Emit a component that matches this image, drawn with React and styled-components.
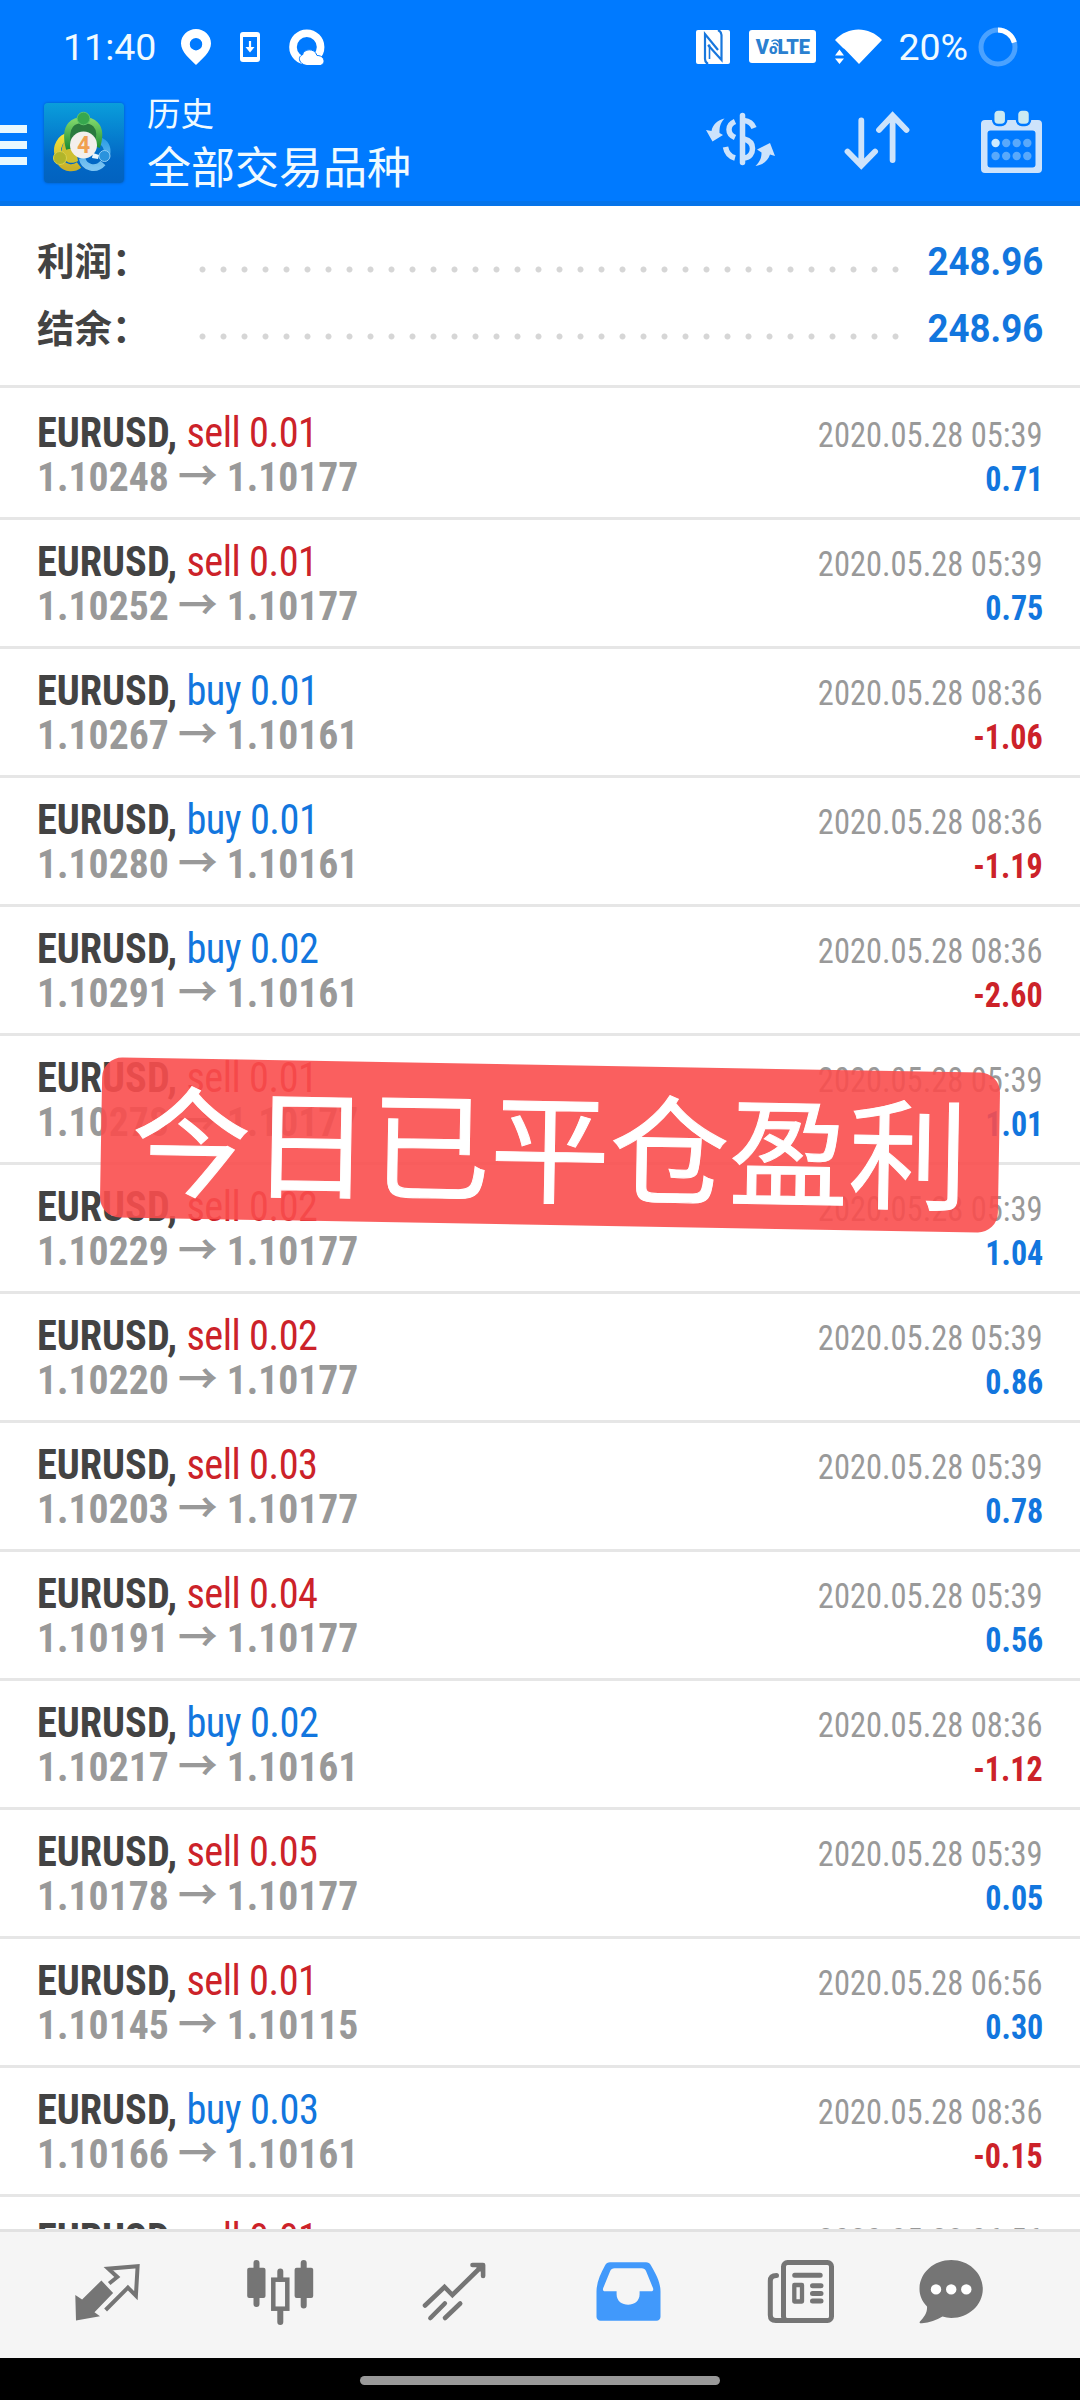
import React from "react";
import styled, { createGlobalStyle } from "styled-components";

const COLORS = {
  PRIMARY: "#007aff",
  BUY: "#1276de",
  SELL: "#cc2229",
  DARK: "#434343",
  MUTED: "#999999",
  LINE: "#e6e6e6",
  BAR: "#f5f5f5",
  ICON: "#757575",
};

const GlobalStyle = createGlobalStyle`
  body {
    margin: 0;
    background: #fff;
    font-family: Roboto, "Noto Sans CJK SC", sans-serif;
  }
`;

const Screen = styled.div`
  width: 1080px;
  height: 2400px;
  display: flex;
  flex-direction: column;
  overflow: hidden;
  position: relative;
`;

const Header = styled.header`
  flex: none;
  height: 206px;
  box-sizing: border-box;
  background: ${COLORS.PRIMARY};
  border-bottom: 5px solid #0574ea;
  color: #f0faff;
`;

const StatusBar = styled.div`
  height: 88px;
  box-sizing: border-box;
  padding: 5px 62px 0 63px;
  display: flex;
  align-items: center;
  justify-content: space-between;
  font-size: 37.5px;
`;

const StatusGroup = styled.div`
  display: flex;
  align-items: center;
  gap: ${(props) => props.$gap}px;

  svg {
    display: block;
  }
`;

const Clock = styled.span`
  margin-right: -4px;
`;

const Battery = styled.div`
  display: flex;
  align-items: center;
  gap: 10px;
  margin-left: -3px;
`;

const VolteBadge = styled.span`
  position: relative;
  width: 67px;
  height: 33px;
  border-radius: 3px;
  background: #fff;
  color: #2a80d0;
  font-size: 20px;
  font-weight: 900;
  line-height: 34px;
  text-align: center;

  svg {
    position: absolute;
    left: 21px;
    top: 8px;
  }
`;

const SmallO = styled.span`
  font-size: 15px;
`;

const AppBar = styled.div`
  display: flex;
  height: 113px;
  padding-right: 34px;
`;

const MenuButton = styled.div`
  width: 27px;
  height: 40px;
  margin: 37px 17px 0 0;
  display: flex;
  flex-direction: column;
  justify-content: space-between;

  span {
    height: 8px;
    background: #e8f8ff;
  }
`;

const LogoTile = styled.div`
  width: 80px;
  height: 80px;
  margin-top: 15px;
  border-radius: 4px;
  background: linear-gradient(#0a9edb, #0268c6 70%, #0262bf);
  box-shadow: 0 0 3px #0259b8;
`;

const Titles = styled.div`
  flex: 1;
  padding: 2px 0 0 23px;
`;

const Title = styled.div`
  font-family: "Noto Sans CJK SC", sans-serif;
  font-size: ${(props) => props.$size}px;
  line-height: ${(props) => props.$line}px;
`;

const Actions = styled.div`
  display: flex;
  align-items: flex-start;
  gap: 65px;
  padding-top: 20px;
`;

const Summary = styled.section`
  flex: none;
  height: 182px;
  box-sizing: border-box;
  padding: 22px 37px 0;
  border-bottom: 3px solid ${COLORS.LINE};
`;

const SummaryRow = styled.div`
  height: 67px;
  display: flex;
  align-items: center;
`;

const SummaryLabel = styled.div`
  width: 155px;
  margin-bottom: 5px;
  font-family: "Noto Sans CJK SC", sans-serif;
  font-size: 37.5px;
  font-weight: 700;
  line-height: 50px;
  color: ${COLORS.DARK};
`;

const Leader = styled.div`
  width: 714px;
  height: 7px;
  margin-top: 16px;
  margin-right: auto;
  background: radial-gradient(circle, #d6d6d6 2.6px, transparent 3.4px) 0 0 / 21px 7px repeat-x;
`;

const SummaryValue = styled.div`
  font-size: 38.4px;
  font-weight: 700;
  line-height: 50px;
  color: ${COLORS.BUY};
  transform: scaleX(0.955);
  transform-origin: right;
`;

const History = styled.main`
  flex: 1;
  min-height: 0;
  overflow: hidden;
  padding-top: 3px;
`;

const Deal = styled.div`
  height: 129px;
  box-sizing: border-box;
  padding: 19px 37px 0;
  border-bottom: 3px solid ${COLORS.LINE};
`;

const DealLine = styled.div`
  height: 45px;
  line-height: 45px;
  display: flex;
  align-items: baseline;
  justify-content: space-between;
  font-family: "Roboto Condensed", Roboto, sans-serif;
  white-space: pre;
`;

const Symbol = styled.div`
  font-size: 42px;
  font-weight: 700;
  color: ${COLORS.DARK};
  transform: scaleX(0.96);
  transform-origin: left;
`;

const Side = styled.span`
  font-weight: 400;
  letter-spacing: -0.5px;
  color: ${(props) => (props.$side === "buy" ? COLORS.BUY : COLORS.SELL)};
`;

const Prices = styled.div`
  font-size: 41px;
  font-weight: 700;
  color: ${COLORS.MUTED};
  transform: scaleX(0.967);
  transform-origin: left;
`;

const Arrow = styled.span`
  font-family: "Noto Sans CJK SC", sans-serif;
  line-height: 0;
`;

const Time = styled.div`
  font-size: 34.5px;
  color: ${COLORS.MUTED};
  transform: scaleX(0.942);
  transform-origin: right;
`;

const Profit = styled.div`
  font-size: 34.5px;
  font-weight: 700;
  color: ${(props) => (props.$loss ? COLORS.SELL : COLORS.BUY)};
  transform: scaleX(0.93);
  transform-origin: right;
`;

const Sticker = styled.div`
  position: absolute;
  left: 101px;
  top: 1065px;
  width: 898px;
  height: 160px;
  border-radius: 20px;
  background: rgba(250, 78, 78, 0.9);
  transform: rotate(1deg);
  color: #fff;
  font-family: "Noto Sans CJK SC", sans-serif;
  font-size: 119.5px;
  line-height: 153px;
  text-align: center;
  white-space: nowrap;
  -webkit-text-stroke: 1px #fff;
`;

const TabBar = styled.nav`
  flex: none;
  height: 129px;
  box-sizing: border-box;
  border-top: 3px solid #e2e2e2;
  background: ${COLORS.BAR};
  display: grid;
  grid-template-columns: repeat(5, 173.6px) 126px;
  padding-left: 20px;
`;

const Tab = styled.div`
  display: flex;
  justify-content: center;
  padding-top: 25px;
  color: ${(props) => (props.$active ? "#4199fb" : COLORS.ICON)};
`;

const GestureBar = styled.div`
  flex: none;
  height: 42px;
  background: #000;
  display: flex;
  justify-content: center;

  span {
    width: 360px;
    height: 9px;
    margin-top: 18px;
    border-radius: 5px;
    background: #999;
  }
`;

const PinIcon = () => (
  <svg width="30" height="36" viewBox="0 0 30 36">
    <path
      fill="#fff"
      fillRule="evenodd"
      d="M15 0C6.700 0 0 6.500 0 14.500 0 23 9 30 15 36c6-6 15-13 15-21.500C30 6.500 23.300 0 15 0Zm0 9a6.200 6.200 0 1 1 0 12.400A6.200 6.200 0 0 1 15 9Z"
    />
  </svg>
);

const PhoneIcon = () => (
  <svg width="20" height="30" viewBox="0 0 20 30">
    <rect width="20" height="30" rx="3" fill="#fff" />
    <rect x="3" y="5" width="14" height="20" fill={COLORS.PRIMARY} />
    <path d="M10 9v7" stroke="#fff" strokeWidth="2.200" />
    <path d="M5.500 15h9L10 20.500Z" fill="#fff" />
  </svg>
);

const BrowserIcon = () => (
  <svg width="36" height="36" viewBox="0 0 36 36">
    <circle cx="17.800" cy="18" r="13.800" fill="none" stroke="#fff" strokeWidth="7.600" />
    <path
      fill="#fff"
      stroke={COLORS.PRIMARY}
      strokeWidth="1"
      d="M18 36.500c-8-1-10-9-4.500-10.500 1-6.500 12-7.500 14.500.5 9 0 9 10 2 10Z"
    />
    <path fill="#fff" d="M13 26.500c1-1 2.500-.5 3.500-.5 2-5.500 9-5.500 11 1.500 7 0 7 8.500 3 8.500H18Z" />
  </svg>
);

const NfcIcon = () => (
  <svg width="34" height="34" viewBox="0 0 34 34">
    <rect width="34" height="34" rx="2" fill="#fff" />
    <g fill="none" stroke="#1877dd" strokeWidth="2.200">
      <path d="M12 34c-3-1.500-3.500-3-3.500-5V4.500L26 27V34" stroke="none" />
      <path d="M12 34c-2.500-1.500-3-3-3-5V4l13 16" />
      <path d="M22 0c3 1.500 3.500 3 3.500 5v25L12 15" />
      <path d="M13.500 14.500V29" strokeWidth="1.600" />
    </g>
  </svg>
);

const VolteWaves = () => (
  <svg width="12" height="9" viewBox="0 0 12 9">
    <g fill="none" stroke="#2a80d0" strokeWidth="1.600">
      <path d="M1.500 3.500C5 .5 9 2 10.500 7" />
      <path d="M3 6c2-1.500 4-.5 5 2" />
    </g>
  </svg>
);

const WifiIcon = () => (
  <svg width="47" height="36" viewBox="0 0 47 36">
    <path fill="#fff" d="M0 11C13-3 34-3 47 11L24 35 12 22.500 9.500 20 8 19Z" />
    <path fill="#fff" d="M4.500 20.500 9 26.500H0ZM0 29.500h9L4.500 35Z" />
  </svg>
);

const BatteryRing = () => (
  <svg width="40" height="40" viewBox="0 0 40 40">
    <circle cx="20" cy="20" r="17" fill="none" stroke="#4ba2ff" strokeWidth="5" />
    <path d="M20 3a17 17 0 0 1 16.300 12.500" fill="none" stroke="#fff" strokeWidth="5" />
  </svg>
);

const Logo = () => (
  <svg width="80" height="80" viewBox="0 0 80 80">
    <defs>
      <linearGradient id="green" x1="0" y1="0" x2="0" y2="1">
        <stop offset="0" stopColor="#7fd66a" />
        <stop offset="1" stopColor="#1c8c33" />
      </linearGradient>
      <linearGradient id="yellow" x1="0" y1="0" x2="0" y2="1">
        <stop offset="0" stopColor="#f2e23a" />
        <stop offset="1" stopColor="#c9b02a" />
      </linearGradient>
      <linearGradient id="sky" x1="0" y1="0" x2="0" y2="1">
        <stop offset="0" stopColor="#2f9fe6" />
        <stop offset="1" stopColor="#7cc4f2" />
      </linearGradient>
    </defs>
    <path d="M25 33c-9 2-13 11-11 18M17 60c5 6 13 6 18 2" fill="none" stroke="url(#yellow)" strokeWidth="7" />
    <path d="M29 32c-6 1-11 6-12 20 4 9 12 9 17 6Z" fill="#cdbf2f" />
    <path d="M38 55c2 10 14 13 21 5M55 37c7 3 9 8 8 14" fill="none" stroke="url(#sky)" strokeWidth="6.500" />
    <path d="M25 46C18 20 32 17 39 17s22 3 14 27" fill="#2a7a3e" stroke="url(#green)" strokeWidth="6" />
    <circle cx="39.500" cy="15.500" r="6.300" fill="#37a84e" stroke="#5fc46c" />
    <circle cx="16" cy="55" r="6.500" fill="#b1b52a" stroke="#d8d24a" />
    <circle cx="60.500" cy="53" r="5.500" fill="#2a93dd" stroke="#8fcdf6" />
    <path d="M49 50l6 2-1 4-6-1Z" fill="#e6f4fd" />
    <circle cx="39.500" cy="42" r="13.500" fill="#f3efec" />
    <text x="39.500" y="50" textAnchor="middle" fontFamily="Roboto" fontWeight="700" fontSize="23" fill="#f0a050">
      4
    </text>
  </svg>
);

const CurrencyIcon = () => (
  <svg width="70" height="64" viewBox="0 0 70 64">
    <g fill="none" stroke="#cde3fb" strokeWidth="5.500">
      <path d="M36.500 7.500v47" strokeLinecap="round" />
      <path d="M38 12.500c5.500.5 8.500 3.500 10 7.500" />
      <path d="M38 31c6 1.500 8.500 5 8.500 9.500s-2.500 9-8.500 9.500" />
      <path d="M29 13.500c-8 3.500-8 12.500 0 16" />
      <path d="M19.500 39c1 5.500 4 9.500 9.500 11" />
    </g>
    <path fill="#cde3fb" d="M18.500 10.500c-4.500 5-5 8.500-5 14.500l3.500 2-10.500 6.500L0 22l5.500 1c1-6 6-11 13-12.500Z" />
    <path fill="#cde3fb" d="M49.500 58c5-5 6-8.500 6-13.500L51 41.500l13-6.500 5 13-5-1.500c-2 6-7 10.500-14.500 11.500Z" />
  </svg>
);

const SortIcon = () => (
  <svg width="72" height="64" viewBox="0 0 72 64">
    <g fill="none" stroke="#cde3fb" strokeWidth="5.800" strokeLinecap="round">
      <path d="M20.300 12.500v44M6.500 43.500l13.800 14 13.800-14" />
      <path d="M51.600 8v44M38 22l13.600-14.500L65.500 22" />
    </g>
  </svg>
);

const CalendarIcon = () => (
  <svg width="68" height="68" viewBox="0 0 68 68">
    <path
      fill="#cde3fb"
      fillRule="evenodd"
      d="M7 12h53a4 4 0 0 1 4 4v45a4 4 0 0 1-4 4H7a4 4 0 0 1-4-4V16a4 4 0 0 1 4-4Zm5.500 10.500a3 3 0 0 0-3 3v31a3 3 0 0 0 3 3h42a3 3 0 0 0 3-3v-31a3 3 0 0 0-3-3Z"
    />
    <g fill="#cbeaf2" stroke={COLORS.PRIMARY} strokeWidth="2.500">
      <rect x="15.200" y="1.500" width="13" height="15.500" rx="5" />
      <rect x="39" y="1.500" width="13" height="15.500" rx="5" />
    </g>
    {[35, 48].map((y) =>
      [17.6, 28.2, 38.7, 49.3].map((x) => (
        <circle key={x + "-" + y} cx={x} cy={y} r="4.200" fill={x < 18 && y < 40 ? "#cdeaff" : "#59a9fb"} />
      ))
    )}
  </svg>
);

const QuotesIcon = () => (
  <svg width="72" height="72" viewBox="0 0 72 72">
    <path fill="currentColor" d="m4.300 38 6.800 4.500 19.300-19L42.100 36 23.500 55.300l5.500 4-24 4.200Z" />
    <path
      fill="none"
      stroke="currentColor"
      strokeWidth="4"
      d="m38.200 26.500 8.100-6.500-9-8.300 29.300-2.400-1.700 29.400-8-8-22.300 22.300"
    />
  </svg>
);

const ChartIcon = () => (
  <svg width="72" height="72" viewBox="0 0 72 72">
    <g fill="none" stroke="currentColor" strokeWidth="6" strokeLinecap="round">
      <path d="M12.500 6v41M36.300 14.500V22M36.300 54v11M59.700 6v42.500" />
    </g>
    <rect x="3.200" y="10.700" width="18.300" height="30.300" rx="2" fill="currentColor" />
    <rect x="50.600" y="10.700" width="18.600" height="30.300" rx="2" fill="currentColor" />
    <rect x="29.300" y="22.700" width="14" height="29" fill="none" stroke="currentColor" strokeWidth="4.500" />
  </svg>
);

const TradeIcon = () => (
  <svg width="72" height="72" viewBox="0 0 72 72">
    <g fill="none" stroke="currentColor" strokeWidth="4.600" strokeLinecap="round">
      <path d="M7 48.500 26.500 30l7.900 8L64.500 8.500" />
      <path d="M54.500 8h10.600v11" strokeLinejoin="round" />
      <path d="m12.400 61 14.400-14.500M27 61l15.200-14.500" />
    </g>
    <path fill="currentColor" d="m56 8 9 9V8Z" />
  </svg>
);

const InboxIcon = () => (
  <svg width="72" height="72" viewBox="0 0 72 72">
    <path
      fill="currentColor"
      fillRule="evenodd"
      d="M18 5.300h36c2 0 4 1.200 5 3.200 5.500 9.500 9.500 17 9.500 26v25a4 4 0 0 1-4 4.200h-56a4 4 0 0 1-4-4.200v-25c0-9 4-17.500 8.500-26 1-2 3-3.200 5-3.200Zm4.500 6c-2 0-3.500 1-4.300 2.800l-7 17c-.700 2 0 3.200 1.800 3.200h11.600v3c0 14 23 14 23 0v-3h11.600c1.800 0 2.500-1.200 1.800-3.200l-7-17c-.800-1.800-2.300-2.800-4.300-2.800Z"
    />
  </svg>
);

const NewsIcon = () => (
  <svg width="72" height="72" viewBox="0 0 72 72">
    <g fill="none" stroke="currentColor" strokeWidth="5">
      <rect x="18.500" y="5.500" width="48" height="58" rx="4" />
      <path d="M11.500 18.500c-4 0-6.200 2-6.200 5.500v34c0 4 2 5.500 5.500 5.500H22" strokeLinecap="round" />
      <path d="M29.700 18.300h25.500M47.500 28.700H56M47.500 36.400H56M47.500 44H56" strokeLinecap="round" />
      <rect x="29.300" y="28" width="7.700" height="16.500" strokeWidth="4.300" strokeLinejoin="round" />
    </g>
  </svg>
);

const ChatIcon = () => (
  <svg width="72" height="72" viewBox="0 0 72 72">
    <path
      fill="currentColor"
      d="M36.200 3C18.700 3 4.500 16 4.500 32c0 6.500 2.600 12.500 7.500 17.500C12.500 56 9 60 5 64.500 4 66 5 66.500 7 66.300c7.500-.600 14.500-3.300 20.500-6.700 2.800.900 5.700 1.400 8.700 1.400 17.500 0 31.600-13 31.600-29S53.700 3 36.200 3Z"
    />
    <g fill="#fff">
      <circle cx="21" cy="32.400" r="5.200" />
      <circle cx="36.200" cy="32.400" r="5.200" />
      <circle cx="51.300" cy="32.400" r="5.200" />
    </g>
  </svg>
);

const deals = [
  { side: "sell", lots: "0.01", open: "1.10248", close: "1.10177", time: "05:39", profit: "0.71" },
  { side: "sell", lots: "0.01", open: "1.10252", close: "1.10177", time: "05:39", profit: "0.75" },
  { side: "buy", lots: "0.01", open: "1.10267", close: "1.10161", time: "08:36", profit: "-1.06" },
  { side: "buy", lots: "0.01", open: "1.10280", close: "1.10161", time: "08:36", profit: "-1.19" },
  { side: "buy", lots: "0.02", open: "1.10291", close: "1.10161", time: "08:36", profit: "-2.60" },
  { side: "sell", lots: "0.01", open: "1.10278", close: "1.10177", time: "05:39", profit: "1.01" },
  { side: "sell", lots: "0.02", open: "1.10229", close: "1.10177", time: "05:39", profit: "1.04" },
  { side: "sell", lots: "0.02", open: "1.10220", close: "1.10177", time: "05:39", profit: "0.86" },
  { side: "sell", lots: "0.03", open: "1.10203", close: "1.10177", time: "05:39", profit: "0.78" },
  { side: "sell", lots: "0.04", open: "1.10191", close: "1.10177", time: "05:39", profit: "0.56" },
  { side: "buy", lots: "0.02", open: "1.10217", close: "1.10161", time: "08:36", profit: "-1.12" },
  { side: "sell", lots: "0.05", open: "1.10178", close: "1.10177", time: "05:39", profit: "0.05" },
  { side: "sell", lots: "0.01", open: "1.10145", close: "1.10115", time: "06:56", profit: "0.30" },
  { side: "buy", lots: "0.03", open: "1.10166", close: "1.10161", time: "08:36", profit: "-0.15" },
  { side: "sell", lots: "0.01", time: "06:56" },
];

const tabs = [QuotesIcon, ChartIcon, TradeIcon, InboxIcon, NewsIcon, ChatIcon];

function DealRow({ deal }) {
  return (
    <Deal>
      <DealLine>
        <Symbol>
          EURUSD, <Side $side={deal.side}>{deal.side} {deal.lots}</Side>
        </Symbol>
        <Time>2020.05.28 {deal.time}</Time>
      </DealLine>
      {deal.open && (
        <DealLine>
          <Prices>
            {deal.open} <Arrow>→</Arrow> {deal.close}
          </Prices>
          <Profit $loss={deal.profit.startsWith("-")}>{deal.profit}</Profit>
        </DealLine>
      )}
    </Deal>
  );
}

export default function App() {
  return (
    <Screen>
      <GlobalStyle />
      <Header>
        <StatusBar>
          <StatusGroup $gap={29}>
            <Clock>11:40</Clock>
            <PinIcon />
            <PhoneIcon />
            <BrowserIcon />
          </StatusGroup>
          <StatusGroup $gap={19}>
            <NfcIcon />
            <VolteBadge>
              V<SmallO>o</SmallO>LTE
              <VolteWaves />
            </VolteBadge>
            <WifiIcon />
            <Battery>
              <span>20%</span>
              <BatteryRing />
            </Battery>
          </StatusGroup>
        </StatusBar>
        <AppBar>
          <MenuButton>
            <span />
            <span />
            <span />
          </MenuButton>
          <LogoTile>
            <Logo />
          </LogoTile>
          <Titles>
            <Title $size={33.5} $line={44}>历史</Title>
            <Title $size={44} $line={62}>全部交易品种</Title>
          </Titles>
          <Actions>
            <CurrencyIcon />
            <SortIcon />
            <CalendarIcon />
          </Actions>
        </AppBar>
      </Header>
      <Summary>
        <SummaryRow>
          <SummaryLabel>利润：</SummaryLabel>
          <Leader />
          <SummaryValue>248.96</SummaryValue>
        </SummaryRow>
        <SummaryRow>
          <SummaryLabel>结余：</SummaryLabel>
          <Leader />
          <SummaryValue>248.96</SummaryValue>
        </SummaryRow>
      </Summary>
      <History>
        {deals.map((deal, i) => (
          <DealRow key={i} deal={deal} />
        ))}
      </History>
      <TabBar>
        {tabs.map((Icon, i) => (
          <Tab key={i} $active={Icon === InboxIcon}>
            <Icon />
          </Tab>
        ))}
      </TabBar>
      <GestureBar>
        <span />
      </GestureBar>
      <Sticker>今日已平仓盈利</Sticker>
    </Screen>
  );
}
